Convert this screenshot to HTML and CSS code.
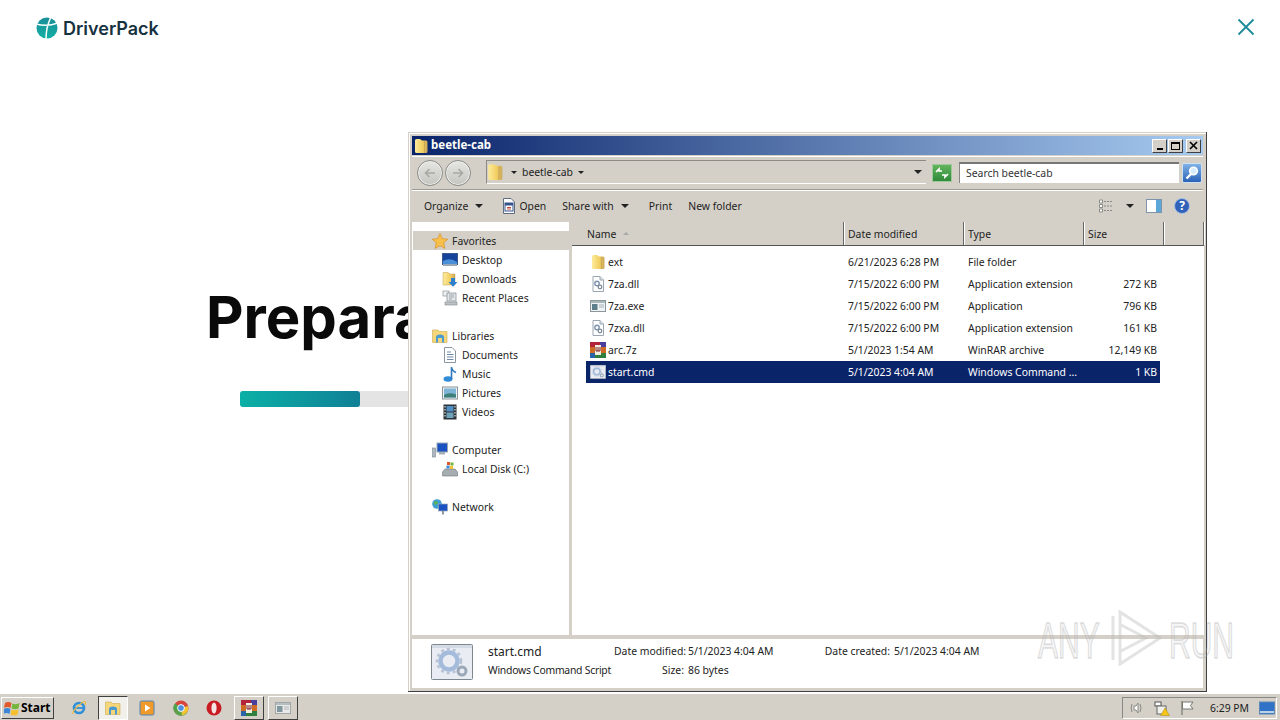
FILE: index.html
```html
<!DOCTYPE html>
<html lang="en">
  <head>
    <meta charset="UTF-8" />
    <meta name="viewport" content="width=device-width, initial-scale=1.0" />
    <title>DriverPack - beetle-cab</title>
    <link rel="stylesheet" href="styles.css">
  </head>
  <body>
    <!-- Icons -->
    <svg class="defs" width="0" height="0">
      <defs>
        <linearGradient id="g-folder" x1="0" y1="0" x2="1" y2="0">
          <stop offset="0" stop-color="#fdeb9c" />
          <stop offset=".6" stop-color="#f2cf62" />
          <stop offset="1" stop-color="#c9a75a" />
        </linearGradient>
        <linearGradient id="g-logo" x1="0" y1="0" x2="0" y2="1">
          <stop offset="0" stop-color="#1a8d98" />
          <stop offset="1" stop-color="#13b0a4" />
        </linearGradient>
        <symbol id="i-folder" viewBox="0 0 16 16">
          <path d="M2 2.5 Q2 1 3.5 1 H7 L9 2.5 H13 Q14.5 2.5 14.5 4 V13.5 Q14.5 15 13 15 H3.5 Q2 15 2 13.5 Z" fill="url(#g-folder)" />
          <path d="M11.5 3 V15" stroke="#b8964c" stroke-width=".8" opacity=".6" />
        </symbol>
        <symbol id="i-dll" viewBox="0 0 16 16">
          <path d="M3 .5 H10 L13.5 4 V15.5 H3 Z" fill="#fff" stroke="#9aa6b2" />
          <path d="M10 .5 V4 H13.5" fill="#dfe6ee" stroke="#9aa6b2" />
          <circle cx="7" cy="7.5" r="2.2" fill="none" stroke="#7f93ad" stroke-width="1.4" />
          <circle cx="10" cy="11" r="1.8" fill="none" stroke="#7f8c99" stroke-width="1.3" />
        </symbol>
        <symbol id="i-exe" viewBox="0 0 16 16">
          <rect x=".5" y="2.5" width="15" height="11" fill="#f0f3f5" stroke="#8c979c" />
          <rect x="1" y="3" width="14" height="2" fill="#a9b8bb" />
          <rect x="2" y="6" width="5.5" height="6" fill="#5d7f8c" />
          <path d="M9 7 H14 M9 9 H14" stroke="#a7b0b4" />
        </symbol>
        <symbol id="i-rar" viewBox="0 0 16 16">
          <rect x="0" y="0" width="16" height="5" fill="#b3243c" />
          <rect x="0" y="5" width="16" height="6" fill="#cf6a25" />
          <rect x="0" y="11" width="16" height="5" fill="#2f7f3f" />
          <rect x="10" y="0" width="6" height="5" fill="#4a3f9c" />
          <rect x="0" y="11" width="5" height="5" fill="#2b63a8" />
          <rect x="5" y="3" width="6" height="10" fill="#f3efe0" />
          <path d="M6 5 V9 H10 V5 M8 5 V9" fill="none" stroke="#7d2030" />
        </symbol>
        <symbol id="i-cmd" viewBox="0 0 42 36">
          <rect x=".5" y=".5" width="41" height="35" rx="1" fill="#e9edf3" stroke="#7d8790" />
          <rect x="1" y="1" width="40" height="3" fill="#d4dbe5" />
          <circle cx="18" cy="17" r="8.5" fill="none" stroke="#a4bbdc" stroke-width="4.5" />
          <circle cx="18" cy="17" r="12" fill="none" stroke="#b7c3d4" stroke-width="2.5" stroke-dasharray="3 3" />
          <circle cx="31" cy="27" r="4" fill="none" stroke="#9aa8b8" stroke-width="3" />
        </symbol>
        <symbol id="i-star" viewBox="0 0 16 16">
          <path d="M8 .5 L10.3 5.6 L15.8 6.2 L11.7 9.9 L12.9 15.4 L8 12.6 L3.1 15.4 L4.3 9.9 L.2 6.2 L5.7 5.6 Z" fill="#f7c04a" stroke="#d98f2b" stroke-width=".7" />
        </symbol>
        <symbol id="i-desktop" viewBox="0 0 16 16">
          <rect x=".5" y="1.5" width="15" height="11" fill="#15439a" stroke="#3c5a8f" />
          <path d="M1 9 Q8 5 15 10 V12 H1 Z" fill="#4a90d9" />
          <rect x="1" y="12" width="14" height="2" fill="#9aa7b5" />
        </symbol>
        <symbol id="i-downloads" viewBox="0 0 16 16">
          <path d="M1 1.5 H6 L8 3 H13 V14 H1 Z" fill="url(#g-folder)" stroke="#bfa055" stroke-width=".5" />
          <path d="M9 7 H13 V11 H15.5 L11 15.8 L6.5 11 H9 Z" fill="#2d7fd0" />
        </symbol>
        <symbol id="i-recent" viewBox="0 0 16 16">
          <rect x="1" y="1" width="6" height="5" fill="#eef1f3" stroke="#8d9598" stroke-width=".7" />
          <rect x="5" y="3" width="9" height="8" fill="#e4e8ea" stroke="#7f888c" stroke-width=".7" />
          <path d="M7 5 H12 M7 7 H12 M7 9 H10" stroke="#7f888c" stroke-width=".7" />
          <rect x="3" y="12" width="12" height="3" fill="#bdc3c6" stroke="#80888c" stroke-width=".6" />
        </symbol>
        <symbol id="i-libraries" viewBox="0 0 16 16">
          <path d="M.5 2 H6 L7.5 3.5 H15 V14.5 H.5 Z" fill="#f5d67a" stroke="#cda94f" stroke-width=".6" />
          <path d="M4 14.5 V9 Q4 6.5 8 6.5 Q12 6.5 12 9 V14.5 H10 V10 H6 V14.5 Z" fill="#4b9ad0" />
        </symbol>
        <symbol id="i-documents" viewBox="0 0 16 16">
          <path d="M2.5 .5 H10 L13.5 4 V15.5 H2.5 Z" fill="#fff" stroke="#8b96a3" />
          <path d="M5 5 H9 M5 7.5 H11.5 M5 10 H11.5 M5 12.5 H11.5" stroke="#6d87a8" />
        </symbol>
        <symbol id="i-music" viewBox="0 0 16 16">
          <ellipse cx="6" cy="13" rx="4.5" ry="2.8" fill="#2f8bd8" />
          <path d="M9.5 13 V1 Q10 5 14 6.5" fill="none" stroke="#2f78c0" stroke-width="1.6" />
        </symbol>
        <symbol id="i-pictures" viewBox="0 0 16 16">
          <rect x=".5" y="2" width="15" height="12" fill="#eef2f4" stroke="#8a9498" />
          <rect x="2" y="3.5" width="12" height="9" fill="#7eb4d6" />
          <path d="M2 10 Q7 7 14 9.5 V12.5 H2 Z" fill="#3f7f7a" />
        </symbol>
        <symbol id="i-videos" viewBox="0 0 16 16">
          <rect x="1.5" y=".5" width="13" height="15" fill="#2c3238" />
          <rect x="4.5" y="2" width="7" height="5.5" fill="#4f8fc4" />
          <rect x="4.5" y="8.5" width="7" height="5.5" fill="#6fa3b8" />
          <path d="M3 2 V14 M13 2 V14" stroke="#d8dde0" stroke-width="1.2" stroke-dasharray="1.5 1.5" />
        </symbol>
        <symbol id="i-computer" viewBox="0 0 16 16">
          <rect x="5" y="1" width="10.5" height="9" fill="#1a52c2" stroke="#9aa7b5" />
          <rect x="7" y="10" width="6" height="2.5" fill="#a5afb8" />
          <rect x=".5" y="6" width="3" height="9" fill="#aeb8c0" stroke="#7d878f" stroke-width=".6" />
        </symbol>
        <symbol id="i-disk" viewBox="0 0 16 16">
          <path d="M.5 11 L3 8 H13 L15.5 11 V15 H.5 Z" fill="#a6adb1" stroke="#6f777b" stroke-width=".6" />
          <rect x="5" y="1" width="3" height="3" fill="#e2572b" />
          <rect x="8.5" y="1.5" width="3" height="3" fill="#74b63d" />
          <rect x="4.5" y="4.5" width="3" height="3" fill="#3b86d6" />
          <rect x="8" y="5" width="3" height="3" fill="#f4c02f" />
        </symbol>
        <symbol id="i-network" viewBox="0 0 16 16">
          <circle cx="5" cy="5" r="4.8" fill="#3f9fd0" />
          <path d="M2 3 Q5 1 6 4 Q4 7 2 5 Z" fill="#5cb04e" />
          <rect x="6.5" y="5" width="9" height="7" fill="#1a52c2" stroke="#9aa7b5" stroke-width=".7" />
          <rect x="10" y="12" width="2" height="3.5" fill="#8d979f" />
        </symbol>
        <symbol id="i-open" viewBox="0 0 16 16">
          <path d="M2.5 .5 H10 L13.5 4 V15.5 H2.5 Z" fill="#fff" stroke="#5f6c80" />
          <rect x="4" y="5" width="8" height="8" fill="#fff" stroke="#34528c" />
          <rect x="4" y="5" width="8" height="2.5" fill="#34528c" />
          <path d="M6 9.5 H10 M6 11 H10" stroke="#c04a3a" />
        </symbol>
      </defs>
    </svg>

    <main class="desktop">
      <!-- App behind the window -->
      <header class="app-header">
        <div class="logo">
          <svg class="logo-mark" width="22" height="22" viewBox="0 0 22 22">
            <circle cx="11" cy="11" r="10.5" fill="url(#g-logo)" />
            <path d="M15 0 Q10 10 10 22 M0 7 Q11 10 22 6" fill="none" stroke="#fff" stroke-width="1.5" />
          </svg>
          <span>DriverPack</span>
        </div>
        <svg class="close" width="18" height="18" viewBox="0 0 18 18">
          <path d="M1.5 1.5 L16.5 16.5 M16.5 1.5 L1.5 16.5" stroke="#1d8b9a" stroke-width="1.8" fill="none" />
        </svg>
      </header>
      <section class="hero">
        <h1>Prepara</h1>
        <div class="progress"><div class="progress-fill" style="width: 15%"></div></div>
      </section>

      <!-- Explorer window -->
      <div class="window">
        <div class="titlebar">
          <svg class="ico"><use href="#i-folder" /></svg>
          <span class="title-text">beetle-cab</span>
          <div class="caption-buttons">
            <span class="caption-btn min"></span>
            <span class="caption-btn max"></span>
            <span class="caption-btn close-btn">
              <svg width="9" height="9" viewBox="0 0 9 9"><path d="M1 1 L8 8 M8 1 L1 8" stroke="#000" stroke-width="1.6" /></svg>
            </span>
          </div>
        </div>

        <div class="addressbar">
          <div class="nav-buttons">
            <span class="round-btn">
              <svg width="14" height="14" viewBox="0 0 14 14"><path d="M12 7 H3 M6.5 3 L2.5 7 L6.5 11" fill="none" stroke="#a8a8a4" stroke-width="1.6" /></svg>
            </span>
            <span class="round-btn">
              <svg width="14" height="14" viewBox="0 0 14 14"><path d="M2 7 H11 M7.5 3 L11.5 7 L7.5 11" fill="none" stroke="#a8a8a4" stroke-width="1.6" /></svg>
            </span>
          </div>
          <div class="address-box">
            <svg class="ico"><use href="#i-folder" /></svg>
            <span class="caret small"></span>
            <span class="crumb">beetle-cab</span>
            <span class="caret small"></span>
            <span class="caret address-drop"></span>
          </div>
          <span class="refresh">
            <svg width="14" height="12" viewBox="0 0 14 12"><path d="M1 5 L4 2 L4 4 H7 M13 7 L10 10 L10 8 H7" fill="none" stroke="#fff" stroke-width="1.7" /></svg>
          </span>
          <div class="search-box">Search beetle-cab</div>
          <span class="search-btn">
            <svg width="16" height="16" viewBox="0 0 16 16"><circle cx="9.5" cy="6" r="3.8" fill="#d8ecff" stroke="#fff" stroke-width="1.6" /><path d="M7 9 L2.5 13.5" stroke="#fff" stroke-width="2.4" /></svg>
          </span>
        </div>

        <div class="toolbar">
          <span class="tool organize">Organize</span><span class="caret"></span>
          <svg class="ico open-ico"><use href="#i-open" /></svg>
          <span class="tool open">Open</span>
          <span class="tool share">Share with</span><span class="caret"></span>
          <span class="tool print">Print</span>
          <span class="tool newfolder">New folder</span>
          <div class="toolbar-right">
            <svg class="ico" viewBox="0 0 16 16"><path d="M1.5 2 H4.5 V5 H1.5 Z M1.5 6.5 H4.5 V9.5 H1.5 Z M1.5 11 H4.5 V14 H1.5 Z" fill="#fff" stroke="#8a8a86" /><path d="M6 3.5 H15 M6 8 H15 M6 12.5 H15" stroke="#8a8a86" stroke-dasharray="2 1" /></svg>
            <span class="caret"></span>
            <svg class="ico" viewBox="0 0 16 16"><rect x=".5" y="1.5" width="15" height="13" fill="#fff" stroke="#7d93ad" /><rect x="10" y="2" width="5" height="12" fill="#5aa7d8" /></svg>
            <svg class="ico" viewBox="0 0 16 16"><circle cx="8" cy="8" r="7.5" fill="#2f62b8" stroke="#a9c0e2" /><text class="help-mark" x="8" y="12" text-anchor="middle">?</text></svg>
          </div>
        </div>

        <div class="panes">
          <nav class="navpane">
            <div class="nav-item head active"><svg class="ico"><use href="#i-star" /></svg>Favorites</div>
            <div class="nav-item"><svg class="ico"><use href="#i-desktop" /></svg>Desktop</div>
            <div class="nav-item"><svg class="ico"><use href="#i-downloads" /></svg>Downloads</div>
            <div class="nav-item"><svg class="ico"><use href="#i-recent" /></svg>Recent Places</div>
            <div class="nav-gap"></div>
            <div class="nav-item head"><svg class="ico"><use href="#i-libraries" /></svg>Libraries</div>
            <div class="nav-item"><svg class="ico"><use href="#i-documents" /></svg>Documents</div>
            <div class="nav-item"><svg class="ico"><use href="#i-music" /></svg>Music</div>
            <div class="nav-item"><svg class="ico"><use href="#i-pictures" /></svg>Pictures</div>
            <div class="nav-item"><svg class="ico"><use href="#i-videos" /></svg>Videos</div>
            <div class="nav-gap"></div>
            <div class="nav-item head"><svg class="ico"><use href="#i-computer" /></svg>Computer</div>
            <div class="nav-item"><svg class="ico"><use href="#i-disk" /></svg>Local Disk (C:)</div>
            <div class="nav-gap"></div>
            <div class="nav-item head"><svg class="ico"><use href="#i-network" /></svg>Network</div>
          </nav>

          <section class="filepane">
            <div class="columns">
              <div class="col col-name">Name <span class="sort"></span></div>
              <div class="col col-date">Date modified</div>
              <div class="col col-type">Type</div>
              <div class="col col-size">Size</div>
              <div class="col col-rest"></div>
            </div>
            <div class="files">
              <div class="file">
                <span class="f-name"><svg class="ico"><use href="#i-folder" /></svg>ext</span>
                <span>6/21/2023 6:28 PM</span><span>File folder</span><span class="f-size"></span>
              </div>
              <div class="file">
                <span class="f-name"><svg class="ico"><use href="#i-dll" /></svg>7za.dll</span>
                <span>7/15/2022 6:00 PM</span><span>Application extension</span><span class="f-size">272 KB</span>
              </div>
              <div class="file">
                <span class="f-name"><svg class="ico"><use href="#i-exe" /></svg>7za.exe</span>
                <span>7/15/2022 6:00 PM</span><span>Application</span><span class="f-size">796 KB</span>
              </div>
              <div class="file">
                <span class="f-name"><svg class="ico"><use href="#i-dll" /></svg>7zxa.dll</span>
                <span>7/15/2022 6:00 PM</span><span>Application extension</span><span class="f-size">161 KB</span>
              </div>
              <div class="file">
                <span class="f-name"><svg class="ico"><use href="#i-rar" /></svg>arc.7z</span>
                <span>5/1/2023 1:54 AM</span><span>WinRAR archive</span><span class="f-size">12,149 KB</span>
              </div>
              <div class="file selected">
                <span class="f-name"><svg class="ico"><use href="#i-cmd" /></svg>start.cmd</span>
                <span>5/1/2023 4:04 AM</span><span>Windows Command ...</span><span class="f-size">1 KB</span>
              </div>
            </div>
          </section>
        </div>

        <div class="details">
          <svg class="details-icon"><use href="#i-cmd" /></svg>
          <div class="details-name">
            <div class="big">start.cmd</div>
            <div class="kind">Windows Command Script</div>
          </div>
          <div class="details-meta">
            <span class="label">Date modified:</span><span>5/1/2023 4:04 AM</span>
            <span class="label">Size:</span><span>86 bytes</span>
          </div>
          <div class="details-meta created">
            <span class="label">Date created:</span><span>5/1/2023 4:04 AM</span>
          </div>
        </div>
      </div>

      <!-- Watermark -->
      <div class="watermark">
        <span class="wm-text">ANY</span>
        <svg class="wm-play" width="56" height="56" viewBox="0 0 56 56">
          <path d="M5 6 V50 M12 2 L52 28 L12 54 Z M13 15 L38 28 L13 41" fill="none" stroke="#b9b9b9" stroke-opacity=".4" stroke-width="3" />
        </svg>
        <span class="wm-text wm-run">RUN</span>
      </div>
    </main>

    <footer class="taskbar">
      <button class="start">
        <svg width="16" height="16" viewBox="0 0 16 16">
          <path d="M1 3 Q4 1 7.5 3 L6.5 8 Q3.5 6 0 8 Z" fill="#e2572b" />
          <path d="M8.5 3.5 Q12 5 15.5 3 L14.5 8.5 Q11 10 7.5 8.5 Z" fill="#74b63d" />
          <path d="M0 9 Q3 7 6.5 9 L5.5 14 Q2.5 12 -1 14 Z" fill="#3b86d6" />
          <path d="M7.5 9.5 Q11 11 14.5 9.5 L13.5 15 Q10 16 6.5 14.5 Z" fill="#f4c02f" />
        </svg>
        Start
      </button>
      <div class="quick">
        <span class="task plain ie">
          <svg class="ico" viewBox="0 0 16 16"><circle cx="8" cy="8" r="5" fill="none" stroke="#2f8fd8" stroke-width="2.6" /><path d="M3 8 H13" stroke="#2f8fd8" stroke-width="1.8" /><path d="M2 14 Q1 10 12 2 Q16 0 14 5" fill="none" stroke="#e9b93f" stroke-width="1.1" /></svg>
        </span>
        <span class="task active"><svg class="ico"><use href="#i-libraries" /></svg></span>
        <span class="task plain">
          <svg class="ico" viewBox="0 0 16 16"><rect x="1" y="1" width="14" height="14" rx="1.5" fill="#f09a2a" stroke="#4f83b8" /><path d="M6 4.5 L11.5 8 L6 11.5 Z" fill="#fff" /></svg>
        </span>
        <span class="task plain">
          <svg class="ico" viewBox="0 0 16 16"><circle cx="8" cy="8" r="7.5" fill="#d8453a" /><path d="M8 8 L1.5 12 A7.5 7.5 0 0 1 2 3.5 Z" fill="#4ca64c" /><path d="M8 8 L1.5 12 A7.5 7.5 0 0 0 14.5 12 Z" fill="#5aa34a" /><path d="M8 8 L15 6 A7.5 7.5 0 0 1 9 15.5 Z" fill="#f2c531" /><circle cx="8" cy="8" r="3.4" fill="#4c8fe0" stroke="#fff" /></svg>
        </span>
        <span class="task plain opera">
          <svg class="ico" viewBox="0 0 16 16"><ellipse cx="8" cy="8" rx="7.5" ry="7.5" fill="#c81c22" /><ellipse cx="8" cy="8" rx="2.6" ry="5.6" fill="#f4e4e4" /></svg>
        </span>
        <span class="task raised"><svg class="ico"><use href="#i-rar" /></svg></span>
        <span class="task raised pale"><svg class="ico"><use href="#i-exe" /></svg></span>
      </div>
      <div class="tray">
        <svg class="ico" viewBox="0 0 16 16"><path d="M5 6 H7 L9 3 V13 L7 10 H5 Z" fill="#fff" stroke="#8a8a86" /><path d="M11 4 Q13 8 11 12 M3 4 Q1 8 3 12" fill="none" stroke="#8a8a86" /></svg>
        <svg class="ico" viewBox="0 0 16 16"><rect x="1" y="2" width="6" height="4" fill="#fff" stroke="#555" /><rect x="3" y="6" width="9" height="8" fill="#f0f0ec" stroke="#666" /><path d="M11 8 L15.5 15.5 H6.5 Z" fill="#f5c518" stroke="#a98510" stroke-width=".5" /></svg>
        <svg class="ico" viewBox="0 0 16 16"><path d="M3 1 V15" stroke="#77776f" stroke-width="1.2" /><path d="M3.5 2 H14 L11.5 5.5 L14 9 H3.5 Z" fill="#fff" stroke="#77776f" /></svg>
        <span class="clock">6:29 PM</span>
        <svg class="ico show-desktop" viewBox="0 0 16 16"><rect x=".5" y="2" width="15" height="12" fill="#2f72c8" stroke="#5d87b5" /><path d="M1 12 H15" stroke="#bcd0e6" stroke-width="2" /></svg>
      </div>
    </footer>
  </body>
</html>
```

FILE: styles.css
```css
html,
body {
  margin: 0;
  padding: 0;
  height: 100%;
}
body {
  display: flex;
  flex-direction: column;
  width: 1280px;
  height: 720px;
  overflow: hidden;
  background-color: #fff;
  font-family: "Noto Sans", sans-serif;
  font-size: 10.4px;
  color: #222;
}
.defs {
  position: absolute;
}
.ico {
  width: 16px;
  height: 16px;
  flex: none;
}

/* App behind the window */
.desktop {
  position: relative;
  flex: 1;
  min-height: 0;
}
.app-header {
  display: flex;
  justify-content: space-between;
  padding: 17px 25px 0 36px;
  height: 39px;
}
.logo {
  display: flex;
  align-items: center;
  gap: 5px;
  height: 22px;
  font-family: Inter, sans-serif;
  font-weight: 600;
  font-size: 18px;
  color: #17323f;
}
.close {
  margin-top: 1px;
}
.hero {
  padding: 226px 0 0 206px;
}
.hero h1 {
  margin: 0;
  font-family: Inter, sans-serif;
  font-weight: 700;
  font-size: 58px;
  line-height: 70px;
  color: #0a0a0a;
  white-space: nowrap;
}
.progress {
  width: 800px;
  height: 16px;
  margin: 39px 0 0 34px;
  background-color: #e4e4e4;
  border-radius: 3px;
}
.progress-fill {
  height: 100%;
  border-radius: 3px;
  background: linear-gradient(90deg, #0bb0a6, #108096);
}

/* Window */
.window {
  position: absolute;
  left: 408px;
  top: 132px;
  width: 799px;
  height: 560px;
  box-sizing: border-box;
  display: flex;
  flex-direction: column;
  padding: 3px;
  background-color: #d4d0c8;
  border-right: 1px solid #404040;
  border-bottom: 1px solid #404040;
  box-shadow: inset 1px 1px 0 #d4d0c8, inset 2px 2px 0 #fff;
}
.titlebar {
  display: flex;
  align-items: center;
  flex: none;
  height: 19px;
  margin: 1px 0 0 1px;
  padding-left: 1px;
  background: linear-gradient(90deg, #0a246a, #a6caf0);
  color: #fff;
  font-weight: 700;
  font-size: 11.5px;
}
.title-text {
  margin: -2px 0 0 2px;
}
.caption-buttons {
  display: flex;
  gap: 1px;
  margin-left: auto;
  margin-right: 2px;
}
.caption-btn {
  position: relative;
  display: flex;
  align-items: center;
  justify-content: center;
  box-sizing: border-box;
  width: 15px;
  height: 14px;
  background-color: #d4d0c8;
  border: 1px solid;
  border-color: #fff #404040 #404040 #fff;
}
.min::after {
  content: "";
  width: 6px;
  height: 2px;
  background-color: #000;
  margin-top: 6px;
}
.max::after {
  content: "";
  width: 9px;
  height: 8px;
  box-sizing: border-box;
  border: 1px solid #000;
  border-top-width: 2px;
}
.close-btn {
  margin-left: 2px;
}

/* Address bar */
.addressbar {
  display: flex;
  align-items: center;
  flex: none;
  height: 32px;
  margin: 1px 0 0 1px;
  padding-left: 5px;
  border-top: 1px solid #fff;
  border-bottom: 1px solid #9c9a94;
  box-shadow: 0 1px 0 #fff;
}
.nav-buttons {
  display: flex;
  gap: 2px;
}
.round-btn {
  display: flex;
  align-items: center;
  justify-content: center;
  box-sizing: border-box;
  width: 26px;
  height: 26px;
  border-radius: 50%;
  background: linear-gradient(#e6e6e4, #c4c4c0);
  border: 1px solid #8c8c88;
  box-shadow: inset 0 0 0 1px #f0f0ee;
}
.address-box {
  display: flex;
  align-items: center;
  width: 439px;
  height: 22px;
  margin: 0 0 2px 15px;
  border-top: 1px solid #8c8a84;
  border-bottom: 1px solid #fff;
  border-left: 1px solid #8c8a84;
}
.address-box .ico {
  width: 18px;
  height: 20px;
  margin-left: -1px;
}
.caret {
  display: inline-block;
  width: 0;
  height: 0;
  flex: none;
  border-left: 4px solid transparent;
  border-right: 4px solid transparent;
  border-top: 4px solid #222;
}
.caret.small {
  border-left-width: 3px;
  border-right-width: 3px;
  border-top-width: 3px;
  margin-left: 7px;
}
.crumb {
  margin: 0 -2px 0 5px;
}
.address-drop {
  margin-left: auto;
  margin-right: 4px;
}
.refresh {
  display: flex;
  align-items: center;
  justify-content: center;
  box-sizing: border-box;
  width: 20px;
  height: 18px;
  margin-left: 6px;
  background: linear-gradient(#62b55c, #2f8a3a);
  border: 1px solid #9ec99a;
}
.search-box {
  box-sizing: border-box;
  width: 220px;
  height: 21px;
  margin: 0 0 2px 7px;
  padding: 2px 0 0 6px;
  background-color: #fff;
  border-top: 2px solid #777;
  border-left: 1px solid #888;
  line-height: 15px;
  color: #333;
}
.search-btn {
  display: flex;
  align-items: center;
  justify-content: center;
  box-sizing: border-box;
  width: 20px;
  height: 20px;
  margin-left: 3px;
  border-radius: 2px;
  background: linear-gradient(#7fb2e6, #2a62b8);
  border: 1px solid #cfe0f0;
}

/* Toolbar */
.toolbar {
  display: flex;
  align-items: center;
  flex: none;
  box-sizing: border-box;
  height: 32px;
  margin-left: 1px;
  padding: 0 0 0 12px;
}
.organize + .caret {
  margin-left: 7px;
}
.open-ico {
  margin-left: 18px;
}
.open {
  margin-left: 2px;
}
.share {
  margin-left: 16px;
}
.share + .caret {
  margin-left: 7px;
}
.print {
  margin-left: 20px;
}
.newfolder {
  margin-left: 16px;
}
.toolbar-right {
  display: flex;
  align-items: center;
  margin: 0 13px 0 auto;
  gap: 12px;
}
.help-mark {
  fill: #fff;
  font-size: 12px;
  font-weight: 700;
}

/* Panes */
.panes {
  display: flex;
  flex: 1;
  min-height: 0;
  margin-left: 1px;
}
.navpane {
  flex: none;
  box-sizing: border-box;
  width: 157px;
  padding-top: 9px;
  background-color: #fff;
}
.nav-item {
  display: flex;
  align-items: center;
  gap: 4px;
  height: 19px;
  padding-left: 30px;
  color: #222;
}
.nav-item.head {
  padding-left: 20px;
}
.nav-item.active {
  margin-left: 1px;
  padding-left: 19px;
  background-color: #d4d0c8;
}
.nav-gap {
  height: 19px;
}
.filepane {
  flex: 1;
  margin-left: 3px;
  background-color: #fff;
}
.columns {
  display: flex;
  height: 24px;
  background-color: #d4d0c8;
  border-bottom: 1px solid #555;
  box-sizing: border-box;
}
.col {
  display: flex;
  align-items: center;
  box-sizing: border-box;
  padding-left: 4px;
  border-right: 1px solid #666;
  box-shadow: 1px 0 0 #fff;
}
.col-name {
  width: 272px;
  padding-left: 15px;
}
.col-date,
.col-type {
  width: 120px;
}
.col-size {
  width: 80px;
}
.col-rest {
  width: 40px;
}
.sort {
  width: 0;
  height: 0;
  margin-left: 7px;
  border-left: 3px solid transparent;
  border-right: 3px solid transparent;
  border-bottom: 3px solid #a8a8a4;
}
.files {
  padding: 5px 0 0 14px;
}
.file {
  display: grid;
  grid-template-columns: 262px 120px 120px 72px;
  align-items: center;
  box-sizing: border-box;
  width: 574px;
  height: 22px;
  padding-bottom: 1px;
}
.f-name {
  display: flex;
  align-items: center;
  gap: 2px;
  padding-left: 4px;
}
.f-size {
  text-align: right;
  padding-right: 3px;
}
.file.selected {
  background-color: #0a246a;
  color: #fff;
}

/* Details pane */
.details {
  display: flex;
  flex: none;
  height: 49px;
  margin: 4px 0 0 1px;
  background-color: #fff;
  line-height: 19px;
  white-space: nowrap;
}
.details-icon {
  width: 42px;
  height: 36px;
  margin: 5px 15px 0 19px;
  flex: none;
}
.details-name {
  width: 126px;
  padding-top: 3px;
}
.big {
  font-size: 12px;
}
.kind {
  letter-spacing: -0.25px;
}
.details-meta {
  display: grid;
  grid-template-columns: 70px auto;
  column-gap: 4px;
  align-content: start;
  padding-top: 3px;
  width: 210px;
}
.details-meta .label {
  text-align: right;
}
.created {
  grid-template-columns: 66px auto;
}

/* Watermark */
.watermark {
  position: absolute;
  left: 1038px;
  top: 610px;
  display: flex;
  align-items: center;
  gap: 8px;
  pointer-events: none;
}
.wm-text {
  display: inline-block;
  width: 62px;
  font-family: "Liberation Sans", sans-serif;
  font-size: 50px;
  line-height: 56px;
  color: rgba(180, 180, 180, 0.12);
  -webkit-text-stroke: 1.5px rgba(170, 170, 170, 0.4);
  transform: scaleX(0.6) translateY(3px);
  transform-origin: left center;
  white-space: nowrap;
}
.wm-run {
  margin-left: -3px;
}

/* Taskbar */
.taskbar {
  display: flex;
  align-items: center;
  flex: none;
  box-sizing: border-box;
  height: 27px;
  padding: 1px 3px 0 1px;
  background-color: #d4d0c8;
  border-top: 1px solid #fff;
}
.start {
  display: flex;
  align-items: center;
  gap: 1px;
  box-sizing: border-box;
  width: 53px;
  height: 22px;
  padding: 0 0 0 2px;
  background-color: #d4d0c8;
  border: 1px solid;
  border-color: #fff #404040 #404040 #fff;
  font-family: "Noto Sans", sans-serif;
  font-weight: 700;
  font-size: 12px;
  color: #000;
}
.quick {
  display: flex;
  align-items: center;
  margin-left: 9px;
}
.task {
  display: flex;
  align-items: center;
  justify-content: center;
  box-sizing: border-box;
  height: 24px;
}
.task.plain {
  width: 34px;
}
.task.ie,
.task.opera {
  width: 32px;
}
.task.opera {
  margin-right: 4px;
}
.task.active {
  width: 30px;
  margin: 0 2px 0 3px;
  background-color: #f2f0ea;
  border: 1px solid;
  border-color: #404040 #fff #fff #404040;
}
.task.raised {
  width: 30px;
  margin-right: 4px;
  border: 1px solid;
  border-color: #fff #404040 #404040 #fff;
}
.task.pale svg {
  opacity: 0.7;
}
.tray {
  display: flex;
  align-items: center;
  box-sizing: border-box;
  width: 155px;
  height: 22px;
  margin-left: auto;
  padding-left: 6px;
  gap: 9px;
  border: 1px solid;
  border-color: #888 #fff #fff #888;
}
.clock {
  margin-left: 6px;
  white-space: nowrap;
  color: #222;
}
.show-desktop {
  margin-left: auto;
  margin-right: 1px;
}
```
